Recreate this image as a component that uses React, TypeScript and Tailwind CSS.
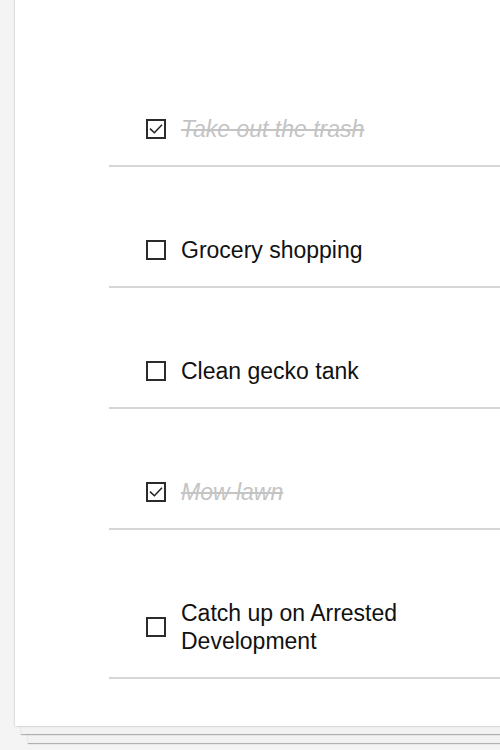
import React from "react";

type Todo = { id: number; title: string; done: boolean };

const todos: Todo[] = [
  { id: 1, title: "Take out the trash", done: true },
  { id: 2, title: "Grocery shopping", done: false },
  { id: 3, title: "Clean gecko tank", done: false },
  { id: 4, title: "Mow lawn", done: true },
  { id: 5, title: "Catch up on Arrested Development", done: false },
];

function Box({ checked }: { checked: boolean }) {
  return (
    <span className="flex size-[20px] shrink-0 items-center justify-center border-2 border-[#2b2b2b] bg-white">
      {checked && (
        <svg viewBox="0 0 16 16" className="size-[16px]" fill="none" stroke="#222" strokeWidth="1.5">
          <path d="M2 7.6 L6.4 11.8 L14 3.8" />
        </svg>
      )}
    </span>
  );
}

export default function App() {
  return (
    <div className="h-[750px] w-[500px] overflow-hidden bg-[#f4f4f4] pl-[15px] font-['Liberation_Sans',Arial,sans-serif]">
      <div className="h-[726px] w-[600px] bg-white shadow-[0_0_2px_rgba(0,0,0,0.3),0_14px_0_-6px_#f2f2f2,0_15px_1px_-6px_rgba(0,0,0,0.28),0_30px_0_-13px_#f2f2f2,0_31px_1px_-13px_rgba(0,0,0,0.28)]">
        <ul className="pt-[46px]">
          {todos.map((t) => (
            <li
              key={t.id}
              className="ml-[94px] flex items-center gap-[15px] border-b-2 border-[#d6d6d6] pb-[22px] pl-[37px] pt-[69px]"
            >
              <Box checked={t.done} />
              <span
                className={`w-[270px] text-[23px] leading-[28px] ${
                  t.done ? "italic text-[#c4c4c4] line-through" : "text-[#111]"
                }`}
              >
                {t.title}
              </span>
            </li>
          ))}
        </ul>
      </div>
    </div>
  );
}
